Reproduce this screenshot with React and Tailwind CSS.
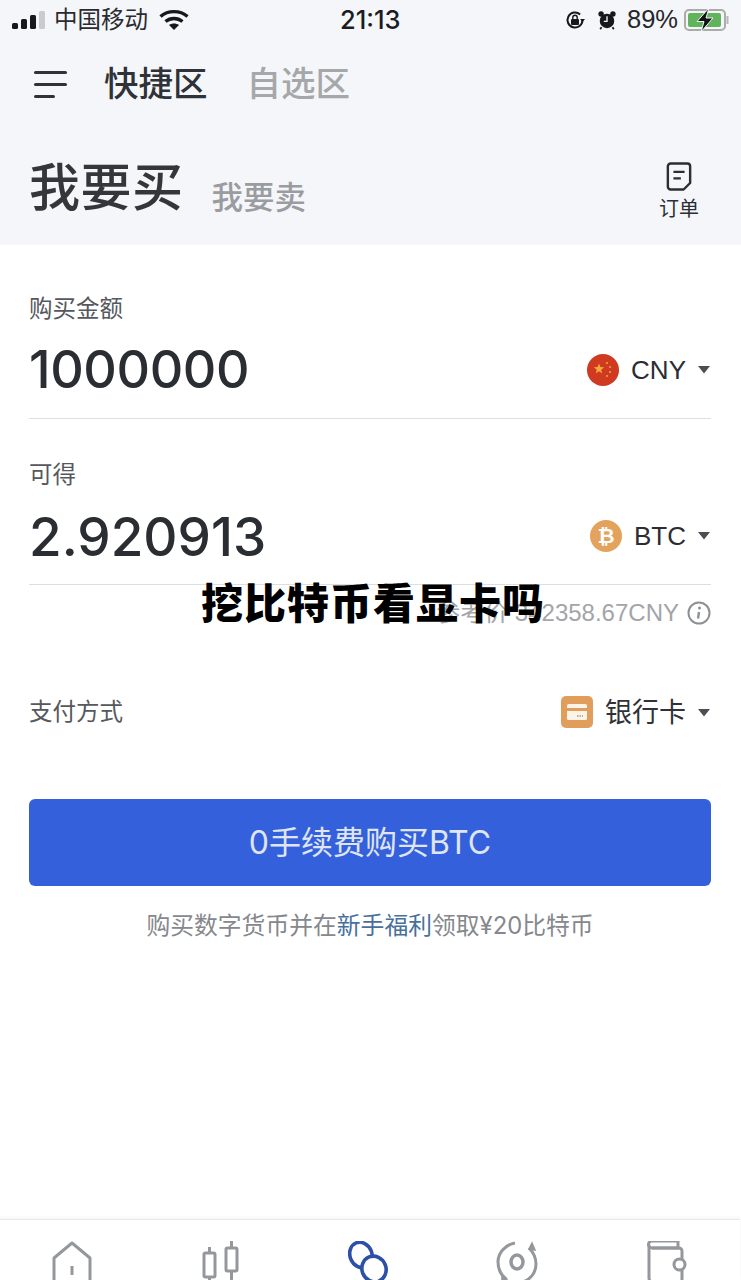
import React from 'react';

const CJK = "font-['Inter','Noto_Sans_CJK_SC',sans-serif]";

const Caret = ({ className = '' }) => (
  <svg width="14" height="9" viewBox="0 0 14 9" className={className}>
    <path d="M1 1h12L7 8.5z" fill="#4b4f55" />
  </svg>
);

const StatusBar = () => (
  <div className="h-[40px] flex items-center justify-between pl-[12px] pr-[11px] text-[#1b1c1f]">
    <div className="flex items-center w-[240px]">
      <svg width="34" height="20" viewBox="0 0 34 20">
        <rect x="0" y="13" width="6" height="6" rx="1.5" fill="#17181a" />
        <rect x="9" y="9" width="6" height="10" rx="1.5" fill="#17181a" />
        <rect x="18" y="5" width="6" height="14" rx="1.5" fill="#17181a" />
        <rect x="27" y="1" width="6" height="18" rx="1.5" fill="#c9cbce" />
      </svg>
      <span className="ml-[8px] text-[23.5px] leading-none text-[#2a2b2e]">中国移动</span>
      <svg width="30" height="22" viewBox="0 0 30 22" className="ml-[11px]">
        <path d="M1.5 7.5C9 1 21 1 28.5 7.5" fill="none" stroke="#17181a" strokeWidth="3.4" />
        <path d="M6.5 12.5C11.5 8.5 18.5 8.5 23.5 12.5" fill="none" stroke="#17181a" strokeWidth="3.4" />
        <path d="M15 21l-5-5c3-2 7-2 10 0z" fill="#17181a" />
      </svg>
    </div>
    <span className="text-[25.5px] leading-none font-medium ml-[88px] text-[#1b1c1f]">21:13</span>
    <div className="flex items-center ml-auto">
      <svg width="22" height="22" viewBox="0 0 22 22">
        <path d="M18.5 11a7.5 7.5 0 1 1-2.4-5.5" fill="none" stroke="#17181a" strokeWidth="2" />
        <path d="M21 10h-5l2.5 3z" fill="#17181a" />
        <rect x="7" y="10" width="8" height="6" rx="1" fill="#17181a" />
        <path d="M8.8 10V8.5a2.2 2.2 0 0 1 4.4 0V10" fill="none" stroke="#17181a" strokeWidth="1.4" />
      </svg>
      <svg width="20" height="22" viewBox="0 0 22 22" className="ml-[11px]">
        <circle cx="11" cy="12" r="8" fill="#17181a" />
        <circle cx="4.5" cy="4.5" r="3" fill="#17181a" />
        <circle cx="17.5" cy="4.5" r="3" fill="#17181a" />
        <path d="M11 7v5.5H7.5" fill="none" stroke="#f4f6fa" strokeWidth="1.5" />
        <path d="M5 19l-1.5 2M17 19l1.5 2" stroke="#17181a" strokeWidth="2" />
      </svg>
      <span className="ml-[10px] text-[25.5px] leading-none text-[#26272a] font-['Liberation_Sans',sans-serif]">89%</span>
      <svg width="46" height="24" viewBox="0 0 46 24" className="ml-[6px]">
        <rect x="1" y="2" width="40" height="20" rx="4" fill="none" stroke="#a9acab" strokeWidth="2" />
        <rect x="4" y="5" width="33" height="14" rx="2" fill="#62b45c" />
        <path d="M43.5 8v8" stroke="#b5b7b8" strokeWidth="2" />
        <path d="M25 0L13 13.5h7L17 24l12-14h-7z" fill="#111214" stroke="#f4f6fa" strokeWidth="1" />
      </svg>
    </div>
  </div>
);

const TopNav = () => (
  <div className="h-[88px] flex items-center pl-[34px]">
    <div className="w-[33px] flex flex-col gap-[9px]">
      <div className="h-[3px] w-[33px] bg-[#2f3236] rounded-full" />
      <div className="h-[3px] w-[33px] bg-[#2f3236] rounded-full" />
      <div className="h-[3px] w-[21px] bg-[#2f3236] rounded-full" />
    </div>
    <span className="ml-[37px] text-[34.5px] leading-none font-medium text-[#2f3236]">快捷区</span>
    <span className="ml-[39px] text-[34.5px] leading-none font-medium text-[#a5a7a9]">自选区</span>
  </div>
);

const OrderIcon = () => (
  <svg width="26" height="31" viewBox="0 0 28 32">
    <path d="M5 2h18a3 3 0 0 1 3 3v18l-7 7H5a3 3 0 0 1-3-3V5a3 3 0 0 1 3-3z" fill="none" stroke="#2b2e32" strokeWidth="2.6" strokeLinejoin="round" />
    <path d="M8 11h12M8 18h8" stroke="#2b2e32" strokeWidth="2.4" />
  </svg>
);

const AmountRow = ({ label, value, valueClass, icon, unit, className = '' }) => (
  <div className={`flex flex-col ${className}`}>
    <div className="pt-[1px] h-[44px] text-[23.5px] leading-[30px] text-[#55585c]">{label}</div>
    <div className="flex items-center h-[82px] pb-[16px] border-b border-[#dcdee0]">
      <span className={`leading-none font-medium text-[#2a2d31] ${valueClass}`}>{value}</span>
      <div className="ml-auto flex items-center">
        {icon}
        <span className="ml-[12px] text-[26px] leading-none text-[#2a2d31] font-['Liberation_Sans',sans-serif]">{unit}</span>
        <Caret className="ml-[11px]" />
      </div>
    </div>
  </div>
);

const CnyIcon = () => (
  <svg width="32" height="32" viewBox="0 0 32 32">
    <circle cx="16" cy="16" r="16" fill="#cf3a20" />
    <path d="M12 9.5l1.4 3.6 3.8.2-3 2.4 1 3.7-3.2-2.1-3.2 2.1 1-3.7-3-2.4 3.8-.2z" fill="#f5a83c" />
    <circle cx="20" cy="9" r="1" fill="#f5a83c" />
    <circle cx="23" cy="13" r="1" fill="#f5a83c" />
    <circle cx="23" cy="18" r="1" fill="#f5a83c" />
    <circle cx="20" cy="22" r="1" fill="#f5a83c" />
  </svg>
);

const BtcIcon = () => (
  <svg width="32" height="32" viewBox="0 0 32 32">
    <circle cx="16" cy="16" r="16" fill="#e4a35c" />
    <text x="16" y="23" textAnchor="middle" fontSize="21" fontWeight="700" fill="#fff" fontFamily="Liberation Sans">₿</text>
  </svg>
);

const CardIcon = () => (
  <svg width="32" height="32" viewBox="0 0 32 32">
    <rect width="32" height="32" rx="5" fill="#e09d5b" />
    <rect x="6" y="8" width="20" height="16" rx="1.5" fill="#fdf4e9" />
    <rect x="6" y="12" width="20" height="3" fill="#e09d5b" />
    <path d="M16 20h6" stroke="#b59270" strokeWidth="1.6" strokeDasharray="1.5 1" />
  </svg>
);

const TabBar = () => (
  <div className="h-[61px] shrink-0 bg-white border-t border-[#e8e9ea] shadow-[0_-1px_4px_rgba(0,0,0,0.05)] w-[742px] -ml-[2px] grid grid-cols-5 justify-items-center pt-[21px]">
    <svg width="40" height="50" viewBox="0 0 40 50" fill="none" stroke="#94979b" strokeWidth="3">
      <path d="M2 17L20 2l18 15v22a4 4 0 0 1-4 4H6a4 4 0 0 1-4-4z" strokeLinejoin="round" />
      <path d="M20 25v9" />
    </svg>
    <svg width="40" height="50" viewBox="0 0 40 50" fill="none" stroke="#94979b" strokeWidth="3">
      <rect x="3" y="12" width="11" height="24" rx="1.5" />
      <path d="M8.5 6v6M8.5 36v10" />
      <rect x="25" y="7" width="11" height="23" rx="1.5" />
      <path d="M30.5 0v7M30.5 30v9" />
    </svg>
    <svg width="42" height="50" viewBox="0 0 42 50" fill="none" stroke="#2c4fa8" strokeWidth="3.6">
      <ellipse cx="13" cy="14" rx="11" ry="13" transform="rotate(-22 13 14)" />
      <ellipse cx="26" cy="28" rx="12" ry="13" fill="#fff" transform="rotate(-22 26 28)" />
    </svg>
    <svg width="44" height="50" viewBox="0 0 44 50" fill="none" stroke="#94979b" strokeWidth="3">
      <path d="M20 2C9 4 3 13 3 21c0 8 3 13 8 17" />
      <path d="M24 42c11-2 17-10 17-19 0-6-3-12-7-16" />
      <path d="M37 2l-3 6 6 1zM7 42l5-4-5-3z" fill="#94979b" strokeWidth="1.5" />
      <ellipse cx="22" cy="21" rx="6" ry="7" strokeWidth="3.5" />
    </svg>
    <svg width="44" height="50" viewBox="0 0 44 50" fill="none" stroke="#94979b" strokeWidth="3">
      <path d="M8 0h26v7H8a3.5 3.5 0 0 1-3.5-3.5A3.5 3.5 0 0 1 8 0z" />
      <path d="M5 4v33a4 4 0 0 0 4 4h26a3 3 0 0 0 3-3V10a3 3 0 0 0-3-3H8" />
      <rect x="30" y="18" width="11" height="11" rx="5.5" fill="#fff" />
    </svg>
  </div>
);

export default function App() {
  return (
    <div className={`relative w-[741px] h-[1280px] overflow-hidden bg-white flex flex-col ${CJK}`}>
      {/* top grey area */}
      <div className="h-[245px] shrink-0 bg-[#f4f6fa] flex flex-col">
        <StatusBar />
        <TopNav />
        <div className="flex pl-[29px] pr-[42px] items-start">
          <div className="flex items-center mt-[30px]">
            <span className="text-[51px] leading-[60px] font-medium tracking-[0.5px] text-[#33363a]">我要买</span>
            <span className="ml-[28px] mt-[20px] text-[31.5px] leading-none font-medium text-[#9a9c9f]">我要卖</span>
          </div>
          <div className="ml-auto flex flex-col items-center mt-[33px]">
            <OrderIcon />
            <span className="mt-[5px] text-[20px] leading-[24px] text-[#2b2e32]">订单</span>
          </div>
        </div>
      </div>

      {/* form */}
      <div className="flex-1 pl-[29px] pr-[30px] pt-[48px]">
        <AmountRow
          className="mb-[40px]"
          label="购买金额"
          value="1000000"
          valueClass="text-[52px] tracking-[-0.4px]"
          icon={<CnyIcon />}
          unit="CNY"
        />
        <AmountRow
          label="可得"
          value="2.920913"
          valueClass="text-[53px] mt-[3px]"
          icon={<BtcIcon />}
          unit="BTC"
        />

        <div className="flex items-center justify-end mt-[12px] h-[32px] text-[24px] leading-none text-[#a3a5a8] font-['Liberation_Sans','Noto_Sans_CJK_SC',sans-serif]">
          <span>参考价 342358.67CNY</span>
          <svg width="24" height="24" viewBox="0 0 24 24" className="ml-[8px]">
            <circle cx="12" cy="12" r="10.5" fill="none" stroke="#8e9194" strokeWidth="2" />
            <circle cx="12.5" cy="7" r="1.5" fill="#8e9194" />
            <path d="M12 11l-1 6.500" stroke="#8e9194" strokeWidth="2.4" />
          </svg>
        </div>

        <div className="flex items-center mt-[67px] h-[32px]">
          <span className="text-[23.5px] leading-none text-[#55585c]">支付方式</span>
          <div className="ml-auto flex items-center">
            <CardIcon />
            <span className="ml-[12px] text-[27px] leading-none text-[#2f3236]">银行卡</span>
            <Caret className="ml-[11px]" />
          </div>
        </div>

        <button className="mt-[71px] w-full h-[87px] rounded-[6px] bg-[#3560dc] text-[#dfe5f4] text-[32px] leading-none flex items-center justify-center">
          0手续费购买BTC
        </button>

        <div className="mt-[25px] text-center text-[23.8px] leading-[30px] text-[#85888c]">
          购买数字货币并在<span className="text-[#47709c]">新手福利</span>领取¥20比特币
        </div>
      </div>

      <TabBar />

      {/* headline stamped over the page */}
      <div className="absolute left-[201px] top-[579px] text-[42px] leading-[50px] font-black tracking-[1px] text-black whitespace-nowrap">
        挖比特币看显卡吗
      </div>
    </div>
  );
}
